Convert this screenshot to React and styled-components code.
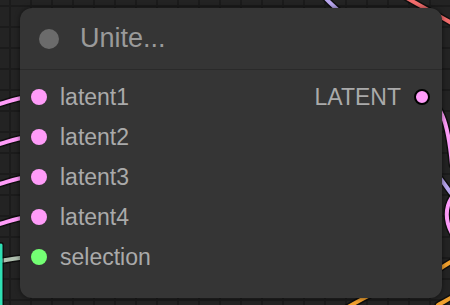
import React from "react";
import styled, { createGlobalStyle } from "styled-components";

const GlobalStyle = createGlobalStyle`
  html, body {
    margin: 0;
    padding: 0;
    background: #222222;
    overflow: hidden;
  }
  body {
    font-family: "Liberation Sans", Arial, sans-serif;
  }
`;

const Canvas = styled.div`
  position: relative;
  width: 450px;
  height: 305px;
  box-sizing: border-box;
  padding: 8px 8px 7px 20px;
  background-color: #232323;
  background-image: linear-gradient(#1b1b1b 2px, transparent 2px),
    linear-gradient(90deg, #1b1b1b 2px, transparent 2px);
  background-size: 21px 21px;
  background-position: 9px 5px;
  overflow: hidden;
`;

const Wires = styled.svg`
  position: absolute;
  inset: 0;
  width: 450px;
  height: 305px;
`;

const Node = styled.div`
  position: relative;
  width: 422px;
  height: 290px;
  background: #353535;
  border-radius: 12px;
  box-shadow: 0 0 5px rgba(0, 0, 0, 0.55);
  display: flex;
  flex-direction: column;
`;

const TitleBar = styled.div`
  height: 61px;
  display: flex;
  align-items: center;
  gap: 21px;
  padding-left: 19px;
  border-bottom: 1px solid #2a2a2a;
`;

const TitleDot = styled.span`
  width: 20px;
  height: 20px;
  border-radius: 50%;
  background: #6b6b6b;
`;

const Title = styled.span`
  font-size: 27px;
  color: #9a9a9a;
  line-height: 1;
`;

const Body = styled.div`
  display: flex;
  justify-content: space-between;
  padding: 7px 12px 0 11px;
`;

const Column = styled.div`
  display: flex;
  flex-direction: column;
  align-items: ${(p) => (p.$right ? "flex-end" : "flex-start")};
`;

const Slot = styled.div`
  height: 40px;
  display: flex;
  align-items: center;
  gap: 13px;
  font-size: 23px;
  color: #aaaaaa;
`;

const SlotDot = styled.span`
  width: 16px;
  height: 16px;
  box-sizing: border-box;
  border-radius: 50%;
  background: ${(p) => p.$color};
  border: ${(p) => (p.$outlined ? "2px solid #000" : "none")};
`;

const PINK = "#ff9cf9";
const GREEN = "#74ff74";

const inputs = [
  { name: "latent1", color: PINK },
  { name: "latent2", color: PINK },
  { name: "latent3", color: PINK },
  { name: "latent4", color: PINK },
  { name: "selection", color: GREEN },
];

const wires = [
  { d: "M -10 106 C 5 104, 12 98, 30 97", color: PINK },
  { d: "M -10 146 C 5 144, 12 138, 30 137", color: PINK },
  { d: "M -10 186 C 5 184, 12 178, 30 177", color: PINK },
  { d: "M -10 226 C 5 224, 12 218, 30 217", color: PINK },
  { d: "M -10 262 C 5 261, 12 258, 30 257", color: "#aebfae" },
  { d: "M 1 245 L 1 310", color: "#2fe0b4", w: 3 },
  { d: "M 322 -6 C 328 2, 334 6, 340 12", color: "#b8a6ee" },
  { d: "M 400 -6 C 420 6, 440 16, 460 28", color: "#f26c6c" },
  { d: "M 422 97 C 440 100, 448 120, 452 165", color: PINK },
  { d: "M 440 178 C 446 186, 450 192, 456 200", color: "#b8a6ee" },
  { d: "M 458 190 C 443 204, 443 224, 458 242", color: PINK },
  { d: "M 438 270 C 444 266, 450 262, 458 258", color: "#f0a02e" },
  { d: "M 438 305 C 444 302, 450 298, 458 294", color: "#f0a02e" },
  { d: "M 340 312 C 352 304, 364 298, 380 290", color: "#f0a02e" },
];

export default function App() {
  return (
    <>
      <GlobalStyle />
      <Canvas>
        <Wires viewBox="0 0 450 305">
          {wires.map((w, i) => (
            <g key={i} fill="none" strokeLinecap="round">
              <path d={w.d} stroke="#000" strokeOpacity="0.55" strokeWidth={(w.w || 4) + 3} />
              <path d={w.d} stroke={w.color} strokeWidth={w.w || 4} />
            </g>
          ))}
        </Wires>
        <Node>
          <TitleBar>
            <TitleDot />
            <Title>Unite...</Title>
          </TitleBar>
          <Body>
            <Column>
              {inputs.map((s) => (
                <Slot key={s.name}>
                  <SlotDot $color={s.color} />
                  {s.name}
                </Slot>
              ))}
            </Column>
            <Column $right>
              <Slot>
                LATENT
                <SlotDot $color={PINK} $outlined />
              </Slot>
            </Column>
          </Body>
        </Node>
      </Canvas>
    </>
  );
}
